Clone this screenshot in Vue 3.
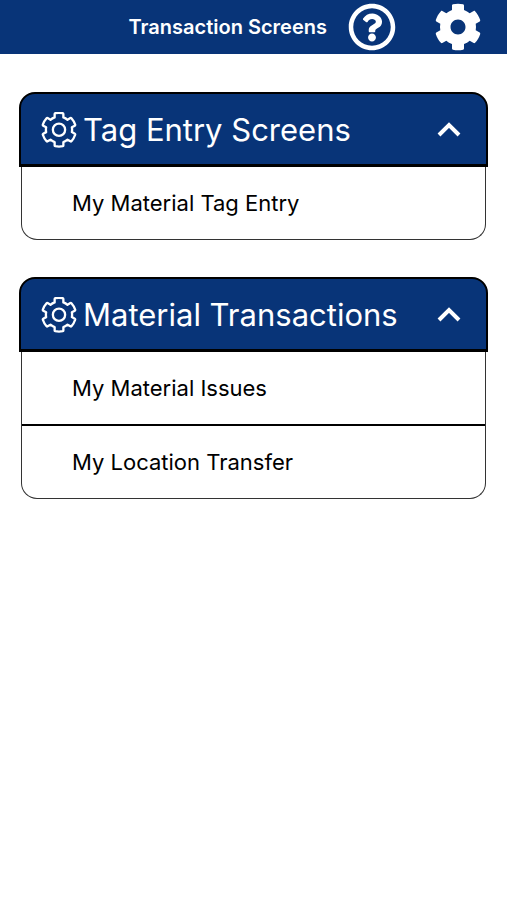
<template>
  <div class="screen">
    <header class="top-bar">
      <h1 class="title">Transaction Screens</h1>
      <button type="button" class="icon-button" aria-label="Help">
        <svg class="bar-icon" viewBox="0 0 512 512" aria-hidden="true">
          <path :d="icons.help" />
        </svg>
      </button>
      <button type="button" class="icon-button" aria-label="Settings">
        <svg class="bar-icon" viewBox="0 0 512 512" aria-hidden="true">
          <path :d="icons.cog + icons.cogHole" />
        </svg>
      </button>
    </header>

    <main class="groups">
      <section v-for="group in groups" :key="group.title" class="group">
        <h2 class="group-heading">
          <button
            type="button"
            class="group-header"
            :aria-expanded="group.open"
            @click="group.open = !group.open"
          >
            <svg class="group-icon" viewBox="-8 -4 528 528" aria-hidden="true">
              <path :d="icons.cog" />
              <circle cx="256" cy="256" r="90" />
            </svg>
            <span class="group-title">{{ group.title }}</span>
            <svg class="chevron" :class="{ closed: !group.open }" viewBox="0 0 24 16" aria-hidden="true">
              <path d="M2 13L12 3L22 13" />
            </svg>
          </button>
        </h2>
        <ul v-if="group.open" class="group-list">
          <li v-for="item in group.items" :key="item" class="group-item">
            <a href="#" class="group-link" @click.prevent>{{ item }}</a>
          </li>
        </ul>
      </section>
    </main>
  </div>
</template>

<script setup>
import { ref } from 'vue';

const groups = ref([
  {
    title: 'Tag Entry Screens',
    open: true,
    items: ['My Material Tag Entry']
  },
  {
    title: 'Material Transactions',
    open: true,
    items: ['My Material Issues', 'My Location Transfer']
  }
]);

const icons = {
  help: 'M256 8C119.043 8 8 119.083 8 256c0 136.997 111.043 248 248 248s248-111.003 248-248C504 119.083 392.957 8 256 8zm0 448c-110.532 0-200-89.431-200-200 0-110.495 89.472-200 200-200 110.491 0 200 89.471 200 200 0 110.53-89.431 200-200 200zm107.244-255.2c0 67.052-72.421 68.084-72.421 92.863V300c0 6.627-5.373 12-12 12h-45.647c-6.627 0-12-5.373-12-12v-8.659c0-35.745 27.1-50.034 47.579-61.516 17.561-9.845 28.324-16.541 28.324-29.579 0-17.246-21.999-28.693-39.784-28.693-23.189 0-33.894 10.977-48.942 29.969-4.057 5.12-11.46 6.071-16.666 2.124l-27.824-21.098c-5.107-3.872-6.251-11.066-2.644-16.363C184.846 131.491 214.94 112 261.794 112c49.071 0 101.45 38.304 101.45 88.8zM298 368c0 23.159-18.841 42-42 42s-42-18.841-42-42 18.841-42 42-42 42 18.841 42 42z',
  cog: 'M487.4 315.7l-42.6-24.6c4.3-23.2 4.3-47 0-70.2l42.6-24.6c4.9-2.8 7.1-8.6 5.5-14-11.1-35.6-30-67.8-54.7-94.6-3.8-4.1-10-5.1-14.8-2.3L380.8 110c-17.9-15.4-38.5-27.3-60.8-35.1V25.8c0-5.6-3.9-10.5-9.4-11.7-36.7-8.2-74.3-7.8-109.2 0-5.5 1.2-9.4 6.1-9.4 11.7V75c-22.2 7.9-42.8 19.8-60.8 35.1L88.7 85.5c-4.9-2.8-11-1.9-14.8 2.3-24.7 26.7-43.6 58.9-54.7 94.6-1.7 5.4.6 11.2 5.5 14L67.3 221c-4.3 23.2-4.3 47 0 70.2l-42.6 24.6c-4.9 2.8-7.1 8.6-5.5 14 11.1 35.6 30 67.8 54.7 94.6 3.8 4.1 10 5.1 14.8 2.3l42.6-24.6c17.9 15.4 38.5 27.3 60.8 35.1v49.2c0 5.6 3.9 10.5 9.4 11.7 36.7 8.2 74.3 7.8 109.2 0 5.5-1.2 9.4-6.1 9.4-11.7v-49.2c22.2-7.9 42.8-19.8 60.8-35.1l42.6 24.6c4.9 2.8 11 1.9 14.8-2.3 24.7-26.7 43.6-58.9 54.7-94.6 1.5-5.5-.7-11.3-5.6-14.1z',
  cogHole: 'M256 336c-44.1 0-80-35.9-80-80s35.9-80 80-80 80 35.9 80 80-35.9 80-80 80z'
};
</script>

<style>
body {
  background: #fff;
}
</style>

<style scoped>
.screen {
  --navy: #083478;
  --ink: #000;

  font-family: Inter, "Liberation Sans", sans-serif;
  color: var(--ink);
}

.screen * {
  box-sizing: border-box;
}

.top-bar {
  display: flex;
  align-items: center;
  justify-content: flex-end;
  padding: 3px 25px;
  background: var(--navy);
  color: #fff;
}

.title {
  margin: 0 21px 0 0;
  font-size: 20px;
  font-weight: 600;
  line-height: 24px;
  white-space: nowrap;
}

.icon-button {
  display: flex;
  padding: 0;
  border: 0;
  background: none;
  color: inherit;
  cursor: pointer;
}

.icon-button + .icon-button {
  margin-left: 38px;
}

.bar-icon {
  width: 48px;
  height: 48px;
  fill: currentColor;
}

.groups {
  display: flex;
  flex-direction: column;
  gap: 37px;
  padding: 38px 19px;
}

.group-heading {
  margin: 0;
  font-size: 31px;
  font-weight: 400;
}

.group-header {
  display: flex;
  align-items: center;
  width: 100%;
  height: 75px;
  padding: 1px 25px 0 20px;
  border: 2px solid var(--ink);
  border-bottom-width: 3px;
  border-radius: 16px 16px 0 0;
  background: var(--navy);
  color: #fff;
  font: inherit;
  text-align: left;
  cursor: pointer;
}

.group-icon {
  flex: none;
  width: 36px;
  height: 36px;
  margin-right: 6px;
  fill: none;
  stroke: currentColor;
  stroke-width: 34;
  stroke-linejoin: round;
}

.group-title {
  flex: 1;
  line-height: 40px;
  white-space: nowrap;
}

.chevron {
  flex: none;
  width: 24px;
  height: 16px;
  fill: none;
  stroke: currentColor;
  stroke-width: 4;
}

.chevron.closed {
  transform: rotate(180deg);
}

.group-list {
  margin: 0 2px;
  padding: 0;
  border: 1px solid #333;
  border-top: 0;
  border-radius: 0 0 16px 16px;
  list-style: none;
}

.group-item + .group-item {
  border-top: 2px solid var(--ink);
}

.group-link {
  display: block;
  padding: 20px 50px;
  color: inherit;
  font-size: 22px;
  line-height: 32px;
  text-decoration: none;
}
</style>
